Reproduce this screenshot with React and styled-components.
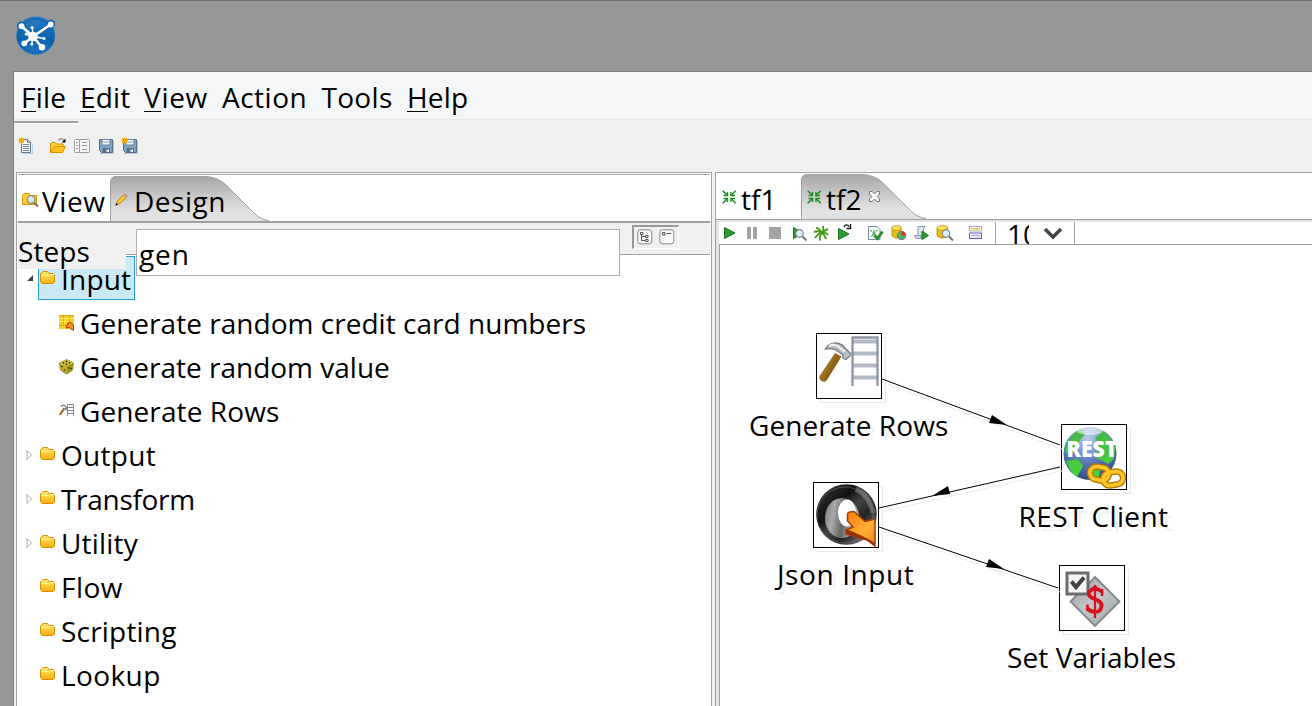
import React from 'react';
import styled, { createGlobalStyle, css } from 'styled-components';

const Global = createGlobalStyle`
  * { box-sizing: border-box; }
  body { margin: 0; overflow: hidden; background: #979797; font-family: "Open Sans", "Noto Sans", sans-serif; font-size: 28px; color: #000; }
  svg { display: block; flex: none; overflow: visible; }
`;

const Frame = styled.div`
  width: 1312px; height: 706px; display: flex; flex-direction: column;
  background: #979797; border-top: 1px solid #707070; overflow: hidden;
`;
const TitleBar = styled.header`
  height: 70px; flex: none; padding: 15px 0 0 16px;
`;
const Window = styled.div`
  flex: 1; margin-left: 13px; display: flex; flex-direction: column; min-height: 0;
  border: solid #7f7f7f; border-width: 1px 0 0 1px; background: #f0f0f0;
`;
const MenuBar = styled.nav`
  height: 48px; flex: none; display: flex; padding: 2px 0 0 7px; background: #f5f6f8;
  border-bottom: 1px solid #e6e6e6; line-height: 46px;
`;
const Text = styled.span`
  display: block; flex: none; white-space: pre; letter-spacing: ${p => p.$ls || 0}px;
  ${p => p.$w && css`width: ${p.$w}px;`}
`;
const Key = styled.span`
  box-shadow: inset 0 -1px 0 #000; display: inline-block; line-height: 30px;
`;
const ToolBar = styled.div`
  height: 52px; flex: none; position: relative; display: flex; padding: 18px 0 0 5px;
  &::before { content: ''; position: absolute; left: 0; top: 1px; width: 64px; height: 2px; background: #a0a0a0; border-bottom: 1px solid #fff; }
`;
const Slot = styled.span`
  flex: none; width: ${p => p.$w}px; height: 16px;
`;
const Body = styled.div`
  flex: 1; display: flex; min-height: 0; padding-left: 2px; gap: 3px;
`;
const LeftPanel = styled.section`
  width: 696px; flex: none; display: flex; flex-direction: column; background: #fff;
  border: solid #a0a0a6; border-width: 1px 1px 0 1px; padding: 1px 1px 0;
`;
const RightPanel = styled.section`
  flex: 1; display: flex; flex-direction: column; background: #fff; min-width: 0;
  border: solid #a0a0a6; border-width: 1px 0 0 1px;
`;
const Tabs = styled.div`
  display: flex; flex: none; background: #fff; padding-top: 1px;
  height: ${p => p.$h}px; border-bottom: ${p => p.$line}px solid #a0a0a0;
  border-top: ${p => p.$top || 0}px solid #a0a0a0;
`;
const Tab = styled.div`
  display: flex; flex: none; width: ${p => p.$w}px; padding: ${p => p.$pad};
  line-height: 46px; position: relative;
`;
const TabShape = styled.svg`
  position: absolute; left: 0; top: 0;
`;
const TabPart = styled.span`
  position: relative; flex: none; margin-top: ${p => p.$t || 0}px; margin-left: ${p => p.$l || 0}px;
  letter-spacing: ${p => p.$ls || 0}px;
`;
const Search = styled.div`
  height: 32px; flex: none; display: flex; align-items: flex-start; position: relative; z-index: 1;
  background: #f0f0f0; border-bottom: 1px solid #a0a0a6;
`;
const StepsLabel = styled.div`
  width: 108px; height: 46px; background: #f0f0f0; line-height: 57px; flex: none; letter-spacing: .1px;
`;
const Field = styled.div`
  width: 484px; height: 47px; margin: 6px 12px 0 10px; background: #fff; border: 1px solid #abadb3;
  padding-left: 2px; line-height: 49px; flex: none; letter-spacing: .9px;
`;
const MiniBar = styled.div`
  width: 47px; height: 24px; margin-top: 2px; flex: none; display: flex; gap: 6px; padding: 2px 0 0 3px;
  border: solid; border-width: 2px 1px 1px 2px; border-color: #999 #fff #fff #999; background: #f0f0f0;
`;
const Tree = styled.div`
  margin-top: 1px; flex: 1; display: flex; flex-direction: column; min-height: 0;
`;
const Row = styled.div`
  height: 44px; flex: none; display: flex; line-height: 47px; padding-left: ${p => p.$child ? 39 : 8}px;
`;
const Arrow = styled.span`
  width: 12px; padding-top: 18px; flex: none;
`;
const Item = styled.div`
  height: 44px; display: flex; gap: 6px; padding: 0 1px; border: 1px solid transparent; line-height: 45px;
  ${p => p.$on && css`background: #cbe8f6; border-color: #26a0da; width: 97px;`}
`;
const ItemIcon = styled.span`
  padding-top: 14px; flex: none; width: 15px;
`;
const RunStrip = styled.div`
  flex: 1; display: flex; flex-direction: column; padding: 2px 0 0 3px; background: #e3e3e3; min-height: 0;
`;
const RunBar = styled.div`
  height: 23px; flex: none; display: flex; background: #fff; border-bottom: 1px solid #a0a0a6; padding: 4px 0 0 5px;
`;
const Zoom = styled.div`
  width: 80px; height: 22px; margin-top: -4px; border: solid #a0a0a6; border-width: 0 1px; display: flex; overflow: hidden;
  padding-left: 11px; line-height: 25px;
`;
const ZoomText = styled.span`
  width: 22px; overflow: hidden; margin-right: 15px; flex: none;
`;
const Canvas = styled.div`
  flex: 1; position: relative; background: #fff; border-left: 1px solid #a0a0a6; overflow: hidden;
`;
const Hops = styled.svg`
  position: absolute; left: 0; top: 0;
`;
const Node = styled.div`
  position: absolute; left: ${p => p.$x - 720}px; top: ${p => p.$y - 245}px; width: 66px; height: 66px;
  border: 1px solid #000; background: #fff; box-shadow: 4px 4px 0 -1px #fff, 4px 4px 0 0 #e9e9e9;
`;
const NodeName = styled.span`
  position: absolute; left: ${p => p.$x}px; top: 69px; line-height: 44px; white-space: pre;
  text-shadow: 4px 4px 0 #f3f3f3; letter-spacing: ${p => p.$ls}px;
`;

const Logo = () => (
  <svg width="40" height="40" viewBox="0 0 40 40">
    <defs><linearGradient id="lg" x1="0" y1="0" x2="0" y2="1"><stop offset="0" stopColor="#2a7cc4" /><stop offset=".6" stopColor="#0862ae" /><stop offset="1" stopColor="#2478c4" /></linearGradient></defs>
    <circle cx="19.7" cy="19.7" r="19.3" fill="url(#lg)" />
    <circle cx="34.7" cy="8" r="4.500" fill="#1768b3" /><circle cx="5.300" cy="10" r="4.500" fill="#1768b3" />
    <circle cx="19.7" cy="19.7" r="17" fill="none" stroke="#0e5ea8" strokeWidth="1" />
    <g stroke="#fff" strokeWidth="2.6" strokeLinecap="round"><path d="M17 20.500 5.600 10.200M17 20.500 34.700 8.500M17 20.500 8.500 27.200M17 20.500 26 31.300" /><path d="M17 20.500 16.300 11.300M17 20.500 15.800 27.500M17 20.500 28 22.500M17 20.500 10.500 18.200" strokeWidth="1.300" /></g>
    <g fill="#fff"><circle cx="17" cy="20.500" r="4.800" /><circle cx="5.600" cy="10.200" r="2.900" /><circle cx="34.700" cy="8.500" r="2.900" /><circle cx="8.300" cy="27.300" r="2.900" /><circle cx="26" cy="31.300" r="3.200" /><circle cx="16.200" cy="11.500" r="1.600" /><circle cx="15.800" cy="28" r="1.600" /><circle cx="28" cy="22.500" r="1.600" /><circle cx="10.400" cy="18.200" r="1.600" /></g>
  </svg>
);

const Spark = () => <g><rect x="0" y="0" width="5" height="5" fill="#ffc20e" /><path d="M2.500 -.5V5.500M-.5 2.500H5.500M0 0 5 5M5 0 0 5" stroke="#f5a400" /></g>;
const NewIcon = () => (
  <svg width="16" height="16" viewBox="0 0 16 16"><path d="M4 15.500H13.500V6" fill="none" stroke="#b9cede" /><path d="M2.500 1.500H8.500L11.500 4.500V14.500H2.500Z" fill="#fff" stroke="#66798c" /><path d="M8.500 1V4.500H12M4 6.500H10M4 8.500H10M4 10.500H10M4 12.500H10" fill="none" stroke="#7086a0" /><Spark /></svg>
);
const OpenIcon = () => (
  <svg width="17" height="16" viewBox="0 0 17 16"><path d="M.5 14.500V5.500L2 4.500H5L6.500 6H13V9" fill="#ffd43d" stroke="#cf8a00" /><path d="M.8 14.500 4 8.500H15.500L12.500 14.500Z" fill="#ffc21a" stroke="#dc9200" /><path d="M8 2.500Q11-1 14 2.500" fill="none" stroke="#555" /><path d="M15.500 .5V4.500H11.500Z" fill="#111" /></svg>
);
const ListIcon = () => (
  <svg width="16" height="15" viewBox="0 0 16 15"><rect x=".5" y="1.500" width="15" height="13" rx="1" fill="#f4f4f4" stroke="#a0a0a0" /><path d="M5.500 2V14M2 4.500H4M2 7.500H4M2 10.500H4M8 4.500H13M8 7.500H13M8 11.500H13" stroke="#999" /></svg>
);
const SaveIcon = ({ star }) => (
  <svg width="16" height="16" viewBox="0 0 16 16"><path d="M2 15.500H15.500V3" fill="none" stroke="#bdcad7" /><path d="M1.500 1.500H14.500V14.500H3.500L1.500 12.500Z" fill="#7fa3c4" stroke="#5b7085" /><path d="M4 1.500H12V7H4Z" fill="#eef3f7" stroke="#71879d" /><path d="M5 4H11" stroke="#91a3b5" /><path d="M4.500 10H12V14.500H4.500Z" fill="#5c7087" /><path d="M8.500 14V11.500H11V14Z" fill="#eee" />{star && <Spark />}</svg>
);
const Folder = () => (
  <svg width="15" height="13" viewBox="0 0 15 13"><defs><linearGradient id="fg" x1="0" y1="0" x2="0" y2="1"><stop offset="0" stopColor="#ffe96e" /><stop offset="1" stopColor="#f9ad10" /></linearGradient></defs><path d="M.5 3V10.500L2 12.500H13L14.500 11V4L13 2.500H9L7.500 .5H3Z" fill="url(#fg)" stroke="#d58c00" /><path d="M1 4.500H8.500L10 3.500H14" stroke="#fff3a0" fill="none" /></svg>
);
const Lens = ({ x, y }) => <g transform={`translate(${x} ${y})`}><path d="M3 3 7 7" stroke="#77716a" strokeWidth="2" /><circle r="3.800" fill="#dbeef6" stroke="#888" strokeWidth="1.200" /></g>;
const ViewIcon = () => (
  <svg width="16" height="14" viewBox="0 0 16 14"><path d="M.5 2.500 2 .5H7L8.500 2.500H14.500V11.500H.5Z" fill="#ffcd31" stroke="#d79200" /><Lens x={9} y={6.500} /></svg>
);
const Pencil = () => (
  <svg width="13" height="13" viewBox="0 0 13 13"><path d="M1 12 2.500 8 8.500 2 11 4.500 5 10.500Z" fill="#ffc629" stroke="#a87412" strokeWidth=".8" /><path d="M8.500 2 10 .5 12.500 3 11 4.500Z" fill="#ee8b8b" stroke="#999" strokeWidth=".6" /><path d="M.3 12.700 1.300 10 3 11.700Z" fill="#111" /></svg>
);
const CardIcon = () => (
  <svg width="16" height="16" viewBox="0 0 16 16"><rect width="15" height="14" fill="#f8d024" /><path d="M0 .5H15M0 10.500H9M4.500 0V9M10.500 0V6" stroke="#d59d18" /><path d="M1 3.500H15M0 6.500H10" stroke="#ffec57" /><path d="M7 13 9 8 12 7.500 14.500 10.500V15H13L10.500 12.500Z" fill="#f5921c" stroke="#a33b05" /></svg>
);
const DiceIcon = () => (
  <svg width="16" height="16" viewBox="0 0 16 16"><path d="M.5 4 7.500 .5 14.500 4 13.500 11 7.500 15 1.500 11Z" fill="#bfae25" stroke="#7c7010" strokeWidth=".8" /><path d="M.5 4 7.500 .5 14.500 4 7.500 7Z" fill="#d9cc3a" /><path d="M8 7.500 14 4.500 13 11 8 14Z" fill="#a09220" /><g fill="#242000"><circle cx="4.500" cy="3.800" r=".9" /><circle cx="7.500" cy="2.400" r=".9" /><circle cx="10.500" cy="3.800" r=".9" /><circle cx="7.500" cy="5.300" r=".9" /><circle cx="3" cy="7.500" r=".8" /><circle cx="5.500" cy="11" r=".8" /><circle cx="10" cy="9" r=".8" /><circle cx="12" cy="9.500" r=".8" /></g></svg>
);
const SmallHammer = () => (
  <svg width="16" height="14" viewBox="0 0 16 14"><path d="M.8 12 5.500 5" stroke="#9a6b1c" strokeWidth="2.200" /><path d="M2 3.500Q3.500 1.500 5.500 2.500L8 4.800 7 6.500 5.500 5" fill="none" stroke="#7d858c" strokeWidth="1.500" /><path d="M8.500 13V1.500H14.500V13M9 4.500H14M9 7.500H14M9 10.500H14" fill="none" stroke="#7d8a99" /></svg>
);
const HammerRows = () => (
  <svg width="64" height="64" viewBox="0 0 64 64">
    <defs><linearGradient id="wood" x1="0" y1="0" x2="1" y2=".7"><stop offset="0" stopColor="#c99b35" /><stop offset=".6" stopColor="#8f6518" /><stop offset="1" stopColor="#70500f" /></linearGradient></defs>
    <path d="M2.500 42 18 19 24.500 22.500 10 46Q8 49 4.500 47Q1.500 45 2.500 42Z" fill="url(#wood)" />
    <path d="M8.500 15Q12 8 20 9Q25 10 28 14L34 20 33 22 29 25.500Q25 25 26 21L22 18Q16 13 8.500 15Z" fill="#b7bcc0" stroke="#7d858b" strokeWidth="1.400" /><path d="M12 12Q18 9 22 13L28 18" fill="none" stroke="#f1f3f4" strokeWidth="2" />
    <g stroke="#b2b9c3" strokeWidth="4"><path d="M36 7.500H60M36 19.500H60M36 31.500H60M36 43.500H60" /></g>
    <path d="M35.500 52V3.500H60.500V52" fill="none" stroke="#8a96a5" strokeWidth="2.300" />
  </svg>
);
const RestIcon = () => (
  <svg width="64" height="64" viewBox="0 0 64 64">
    <defs><radialGradient id="globe" cx=".45" cy=".2" r=".8"><stop offset="0" stopColor="#b9cdf0" /><stop offset=".5" stopColor="#6484c0" /><stop offset="1" stopColor="#304a82" /></radialGradient><linearGradient id="gr" x1="0" y1="0" x2="0" y2="1"><stop offset="0" stopColor="#45b848" /><stop offset="1" stopColor="#46d53c" /></linearGradient></defs>
    <circle cx="28" cy="28.500" r="26.500" fill="url(#globe)" />
    <path d="M5 17Q11 7 20 4L23 9 18 15 13 25 9 30 3 27ZM36 4Q49 9 53 22L52 34 46 39 39 35 33 32 37 21 33 13 38 9ZM4 36 16 34 21 41 15 52Q7 46 4 36ZM31 40 39 42 37 52 29 54Z" fill="url(#gr)" />
    <ellipse cx="28" cy="6" rx="13" ry="4" fill="#fff" opacity=".55" />
    <text x="4.500" y="32" fontFamily="Open Sans" fontSize="22" fontWeight="800" fill="#fff" textLength="51" lengthAdjust="spacingAndGlyphs">REST</text>
    <g fill="none"><g stroke="#b87900" strokeWidth="6.500"><rect x="28" y="42" width="19" height="13" rx="6.500" transform="rotate(9 37 48)" /><rect x="41" y="47" width="20" height="13" rx="6.500" transform="rotate(-9 51 53)" /></g><g stroke="#ffc72b" strokeWidth="3.700"><rect x="28" y="42" width="19" height="13" rx="6.500" transform="rotate(9 37 48)" /><rect x="41" y="47" width="20" height="13" rx="6.500" transform="rotate(-9 51 53)" /></g></g>
  </svg>
);
const JsonIcon = () => (
  <svg width="64" height="64" viewBox="0 0 64 64">
    <defs><linearGradient id="ring" x1=".1" y1=".1" x2=".9" y2=".9"><stop offset="0" stopColor="#333" /><stop offset=".3" stopColor="#111" /><stop offset=".5" stopColor="#444" /><stop offset=".7" stopColor="#222" /><stop offset="1" stopColor="#888" /></linearGradient><linearGradient id="in" x1="0" y1="0" x2="1" y2=".2"><stop offset="0" stopColor="#777" /><stop offset=".3" stopColor="#aaa" /><stop offset=".6" stopColor="#666" /><stop offset="1" stopColor="#bbb" /></linearGradient><linearGradient id="or" x1="0" y1="0" x2="1" y2="1"><stop offset="0" stopColor="#f37b05" /><stop offset=".6" stopColor="#ffb034" /><stop offset="1" stopColor="#e88018" /></linearGradient></defs>
    <circle cx="32.500" cy="31.500" r="30.300" fill="url(#ring)" /><path d="M42 6Q56 13 59 30" fill="none" stroke="#888" strokeWidth="5" opacity=".6" /><circle cx="31" cy="32" r="28" fill="none" stroke="#777" strokeWidth="1" opacity=".5" /><ellipse cx="28" cy="35" rx="17" ry="20" fill="url(#in)" /><ellipse cx="33" cy="30" rx="9" ry="13.500" fill="#fff" />
    <path d="M33.500 31Q34 28.500 40 28.500L51 38.500 61 36V63L53 57 32 51 32 47 39 44 33.500 38Z" fill="url(#or)" stroke="#a73c08" strokeWidth="1.500" /><path d="M32 46V51L53 57 61 63V60Q48 52 32 46Z" fill="#983306" />
  </svg>
);
const VarIcon = () => (
  <svg width="64" height="64" viewBox="0 0 64 64">
    <defs><linearGradient id="dia" x1="0" y1="0" x2="1" y2="1"><stop offset="0" stopColor="#999ea2" /><stop offset=".5" stopColor="#c3c6c9" /><stop offset="1" stopColor="#989da1" /></linearGradient></defs>
    <path d="M35 11 59.500 35.500 35 60 10.500 35.500Z" fill="url(#dia)" stroke="#82878b" strokeWidth="1.800" />
    <rect x="7" y="7" width="21" height="21" fill="#f5f5f5" stroke="#6a6d70" strokeWidth="3" /><path d="M11.500 15.500 16 21 24 11.500" fill="none" stroke="#3f4347" strokeWidth="4" />
    <path d="M42 25.500Q34 20 29 26C26 34 43 32 41.500 40.500 40 49 30 46 27 42" fill="none" stroke="#d6101c" strokeWidth="3.800" /><path d="M42 23V30M27.500 38.500V45" stroke="#d6101c" strokeWidth="2.500" /><path d="M35 20V52M31 24 35 20 39 24" fill="none" stroke="#d6101c" strokeWidth="2.200" />
  </svg>
);
const Merge = () => (
  <svg width="15" height="14" viewBox="0 0 15 14"><path d="M.7 .7 5.500 5.500M13.800 .7 9 5.500M.7 13.300 5.500 8.500M13.800 13.300 9 8.500" stroke="#1f8c26" strokeWidth="1.600" /><path d="M5.500 2V5.500H1.500M9 2V5.500H13M5.500 12V8.500H1.500M9 12V8.500H13" fill="none" stroke="#1f8c26" strokeWidth="1.400" /></svg>
);
const CloseX = () => (
  <svg width="11" height="11" viewBox="0 0 11 11"><path d="M.5 .5H3L5.500 3 8 .5H10.500V3L8 5.500 10.500 8V10.500H8L5.500 8 3 10.500H.5V8L3 5.500 .5 3Z" fill="#fff" stroke="#777" /></svg>
);
const I = ({ children }) => <svg width="16" height="16" viewBox="0 0 16 16">{children}</svg>;
const PlayPath = ({ d = 'M.5 1.500V12.500L11 7Z' }) => <path d={d} fill="#2c9b31" stroke="#176f1e" />;
const Cyl = () => <g><path d="M1 3V11Q6 15 10 11V3Z" fill="#f0bd16" stroke="#a57c0c" strokeWidth=".8" /><ellipse cx="5.500" cy="3" rx="4.700" ry="2.300" fill="#ffe55c" stroke="#b98c0c" strokeWidth=".8" /></g>;
const Play = () => <I><PlayPath /></I>;
const Pause = () => <I><path d="M0 1H4V13H0ZM6 1H10V13H6Z" fill="#a4a4a4" /></I>;
const Stop = () => <I><path d="M0 1H12V13H0Z" fill="#a4a4a4" /></I>;
const Preview = () => <I><PlayPath d="M.5 1.500V12.500L10 7Z" /><Lens x={6.500} y={7.500} /></I>;
const Bug = () => <I><path d="M8 8Q6 2 2 2M8 7Q5 4 0 6M8 7Q5 6 1 12M8 7Q5 9 6 14.500M8 7Q10 5 9 0M8 7Q11 4 14 3M8 7Q12 6 14 9M8 7Q11 9 12 13" fill="none" stroke="#4a9c1c" strokeWidth="1.900" /></I>;
const Replay = () => <I><PlayPath d="M.5 2.500V13.500L11 8Z" /><path d="M6 1Q8-3 11 .5M12.500 -2V2.500H8.500" fill="none" stroke="#111" strokeWidth="1.400" /></I>;
const Verify = () => <I><path d="M.5 .5H9L12 3.500V13.500H.5Z" fill="#fff" stroke="#758b9d" /><path d="M2.500 4 9.500 11M9.500 4 2.500 11M6 4V11" stroke="#3aaa45" strokeWidth="1.300" strokeDasharray="2 1" /><path d="M6.500 9.500 9.500 12.500 14.500 5.500" fill="none" stroke="#28882c" strokeWidth="2.800" /></I>;
const Impact = () => <I><g transform="translate(-1 -1)"><Cyl /></g><circle cx="9.500" cy="9.500" r="4.200" fill="#53b35c" stroke="#777" /><path d="M9.500 9.500V5.500A4 4 0 0 1 13.500 9.500Z" fill="#ed2424" /></I>;
const Sql = () => <I><path d="M4 .5H11L9.500 3V11.500H4Z" fill="#dde6f1" stroke="#8295ae" /><path d="M.5 9.500H7V12.500H2Z" fill="#cfdaea" stroke="#8295ae" /><PlayPath d="M8 5V13.500L14.500 9.500Z" /></I>;
const Explore = () => <I><g transform="translate(-1 -1) scale(1.15 1)"><Cyl /></g><Lens x={9} y={7.500} /></I>;
const Results = () => <I><rect x=".5" y=".5" width="12" height="4.500" fill="#fff" stroke="#aaa" /><path d="M2 2.800H11" stroke="#efb63f" strokeWidth="1.500" /><rect x=".5" y="7" width="12" height="5.500" fill="#eee" stroke="#5a5ae6" /><path d="M2 9.700H11" stroke="#aaa" /></I>;
const ExpandIcon = ({ collapse }) => (
  <svg width="16" height="16" viewBox="0 0 16 16"><rect x=".8" y=".8" width="14" height="14" rx="2.500" fill="#f7f7f7" stroke="#8b8b8b" />{collapse ? <path d="M3.500 3.500H6V6H3.500ZM7.500 4.500H12" fill="none" stroke="#555" /> : <path d="M3.500 3.500H6V5.500H3.500ZM4.500 6V11.500H8M4.500 7.500H8M8.500 6.500H11V8.500H8.500ZM8.500 10.500H11V12.500H8.500Z" fill="none" stroke="#555" />}</svg>
);

const MENU = [['F', 'ile', 59, .2], ['E', 'dit', 64, .2], ['V', 'iew', 78, .7], ['', 'Action', 99.5, .5], ['', 'Tools', 85.5, .3], ['H', 'elp', 70, .2]];
const TREE = [
  { t: 'Input', on: true, a: 'open', ls: .2 },
  { t: 'Generate random credit card numbers', icon: <CardIcon />, ls: .03 },
  { t: 'Generate random value', icon: <DiceIcon /> },
  { t: 'Generate Rows', icon: <SmallHammer />, ls: .1 },
  { t: 'Output', a: 'shut', ls: .3 }, { t: 'Transform', a: 'shut', ls: -.3 }, { t: 'Utility', a: 'shut', ls: .2 },
  { t: 'Flow', ls: .5 }, { t: 'Scripting', ls: .2 }, { t: 'Lookup', ls: .4 },
];
const RUN = [[Play, 23], [Pause, 22], [Stop, 24], [Preview, 21], [Bug, 24], [Replay, 30], [Verify, 24], [Impact, 22], [Sql, 23], [Explore, 32], [Results, 26]];
const NODES = [
  { x: 816, y: 333, t: 'Generate Rows', l: -68, ls: .1, icon: <HammerRows /> },
  { x: 1061, y: 424, t: 'REST Client', l: -43.500, ls: .4, icon: <RestIcon /> },
  { x: 813, y: 482, t: 'Json Input', l: -37, ls: .6, icon: <JsonIcon /> },
  { x: 1059, y: 565, t: 'Set Variables', l: -53, ls: .1, icon: <VarIcon /> },
];
const HOPS = [
  { d: 'M882 379 1060 445', head: 'M1007 425 989 423 992 415Z' },
  { d: 'M1060 467 879 508', head: 'M932 496 948 486 950 494Z' },
  { d: 'M879 527 1058 588', head: 'M1004 569 986 567 989 559Z' },
];

const TabBg = ({ w, h, id }) => (
  <TabShape width={w} height={h} viewBox={`0 0 ${w} ${h}`}>
    <defs><linearGradient id={id} x1="0" y1="0" x2="0" y2="1"><stop offset="0" stopColor="#a6a6a6" /><stop offset=".75" stopColor="#e0e0e0" /><stop offset="1" stopColor="#e3e3e3" /></linearGradient></defs>
    <path d={`M.5 ${h}V6Q1 .5 6 .5H${w - 62}Q${w - 51} 1 ${w - 43} 8L${w - 14} ${h - 8}Q${w - 7} ${h - 1} ${w + 1} ${h - .5}V${h}Z`} fill={`url(#${id})`} />
    <path d={`M.5 ${h}V6Q1 .5 6 .5H${w - 62}Q${w - 51} 1 ${w - 43} 8L${w - 14} ${h - 8}Q${w - 7} ${h - 1} ${w + 1} ${h - .5}`} fill="none" stroke="#a0a0a0" />
  </TabShape>
);

export default function App() {
  return (
    <Frame>
      <Global />
      <TitleBar><Logo /></TitleBar>
      <Window>
        <MenuBar>{MENU.map(([k, r, w, ls]) => <Text key={r} $w={w} $ls={ls}>{k && <Key>{k}</Key>}{r}</Text>)}</MenuBar>
        <ToolBar>
          <Slot $w={31}><NewIcon /></Slot><Slot $w={24}><OpenIcon /></Slot><Slot $w={24}><ListIcon /></Slot><Slot $w={24}><SaveIcon /></Slot><Slot $w={24}><SaveIcon star /></Slot>
        </ToolBar>
        <Body>
          <LeftPanel>
            <Tabs $h={49} $line={2} $top={1}>
              <Tab $w={92} $pad="2px 0 0 4px"><TabPart $t={15}><ViewIcon /></TabPart><TabPart $l={4} $ls={.6}>View</TabPart></Tab>
              <Tab $w={158} $pad="2px 0 0 5px"><TabBg w={158} h={45} id="t1" /><TabPart $t={15}><Pencil /></TabPart><TabPart $l={6} $ls={.5}>Design</TabPart></Tab>
            </Tabs>
            <Search>
              <StepsLabel>Steps</StepsLabel>
              <Field>gen</Field>
              <MiniBar><ExpandIcon /><ExpandIcon collapse /></MiniBar>
            </Search>
            <Tree>
              {TREE.map(n => (
                <Row key={n.t} $child={!!n.icon}>
                  {!n.icon && <Arrow>{n.a === 'open' && <svg width="8" height="8"><path d="M7 1V7H1Z" fill="#404040" /></svg>}{n.a === 'shut' && <svg width="7" height="10"><path d="M1 .5V9.500L5.500 5Z" fill="#fff" stroke="#aaa" /></svg>}</Arrow>}
                  <Item $on={n.on}><ItemIcon>{n.icon || <Folder />}</ItemIcon><Text $ls={n.ls}>{n.t}</Text></Item>
                </Row>
              ))}
            </Tree>
          </LeftPanel>
          <RightPanel>
            <Tabs $h={47} $line={1}>
              <Tab $w={85} $pad="2px 0 0 6px"><TabPart $t={14}><Merge /></TabPart><TabPart $l={4}>tf1</TabPart></Tab>
              <Tab $w={124} $pad="2px 0 0 6px"><TabBg w={124} h={45} id="t2" /><TabPart $t={14}><Merge /></TabPart><TabPart $l={4}>tf2</TabPart><TabPart $t={15} $l={8}><CloseX /></TabPart></Tab>
            </Tabs>
            <RunStrip>
              <RunBar>
                {RUN.map(([C, w], i) => <Slot key={i} $w={w}><C /></Slot>)}
                <Zoom><ZoomText>10</ZoomText><svg width="18" height="22"><path d="M1 7 9 15 17 7" fill="none" stroke="#444" strokeWidth="3.500" /></svg></Zoom>
              </RunBar>
              <Canvas>
                {NODES.map(n => <Node key={n.t} $x={n.x} $y={n.y}>{n.icon}<NodeName $x={n.l} $ls={n.ls}>{n.t}</NodeName></Node>)}
                <Hops width="592" height="461" viewBox="720 245 592 461">
                  {HOPS.map(h => <g key={h.d}><path d={h.d} transform="translate(2 4)" stroke="#ececec" /><path d={h.d} stroke="#000" /><path d={h.head} fill="#000" /></g>)}
                </Hops>
              </Canvas>
            </RunStrip>
          </RightPanel>
        </Body>
      </Window>
    </Frame>
  );
}
